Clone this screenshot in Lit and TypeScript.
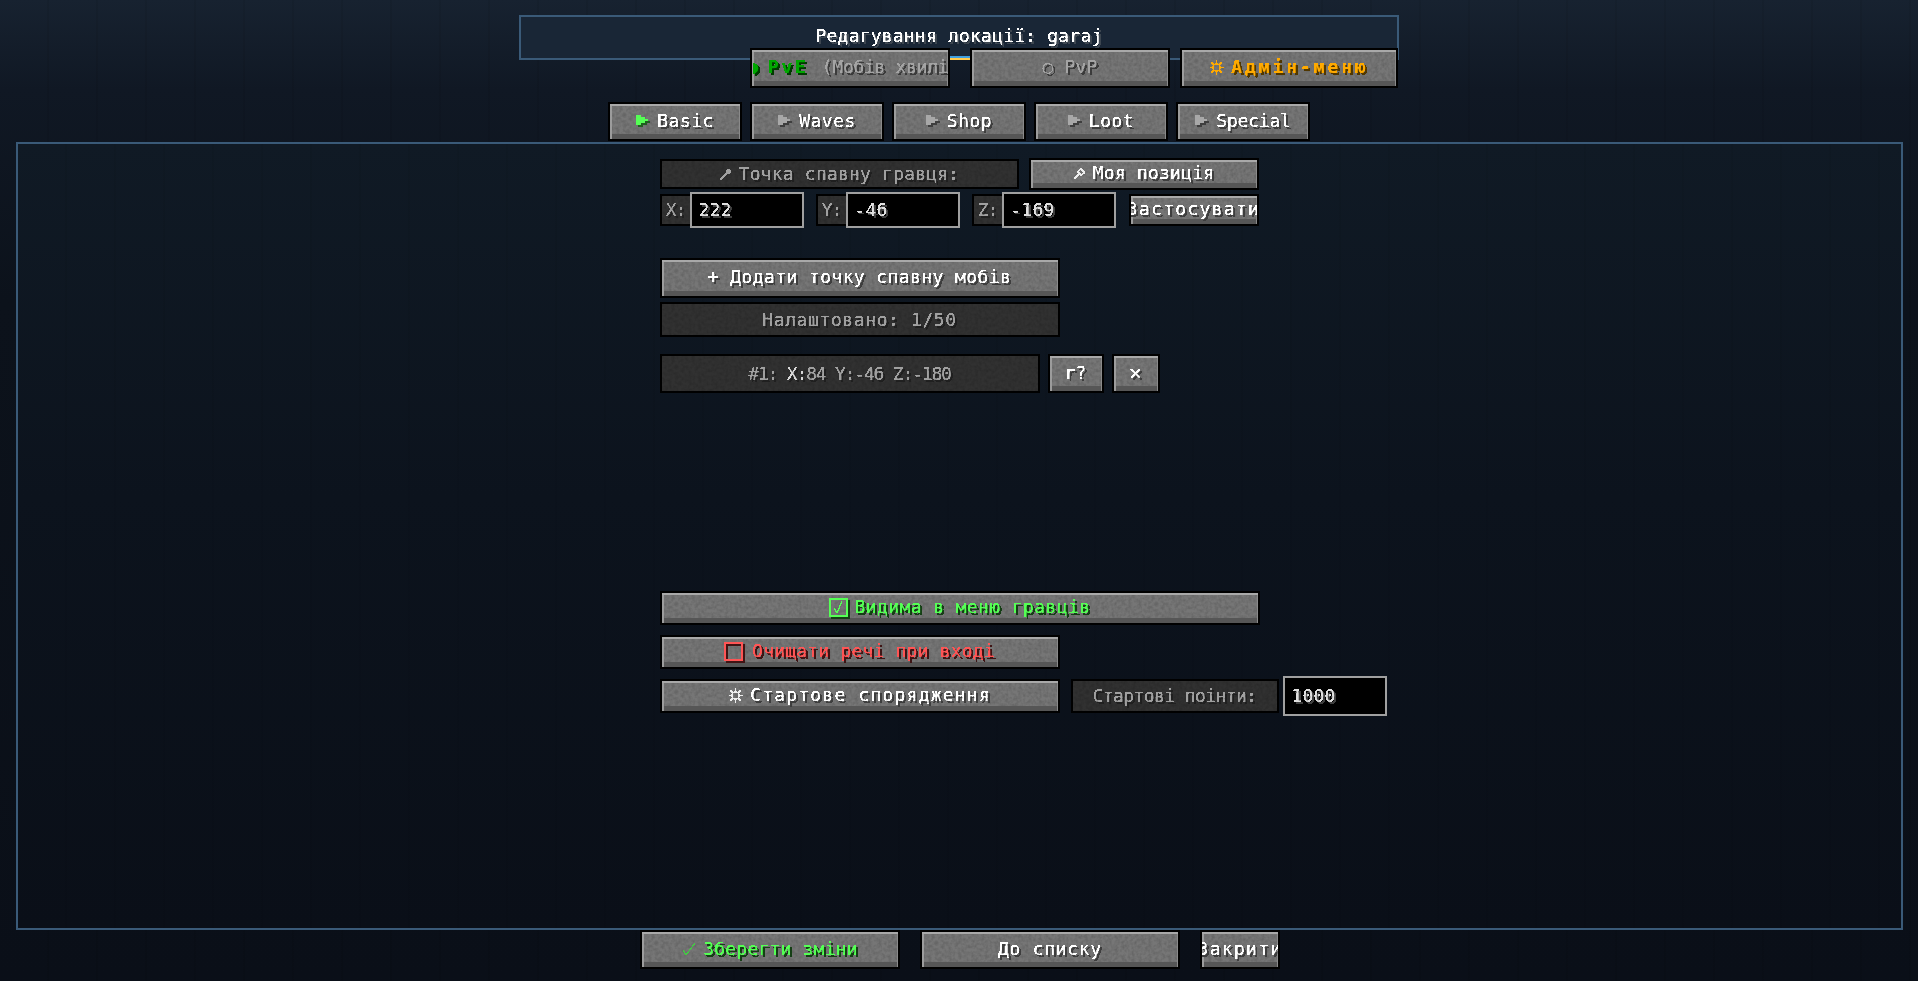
import { LitElement, html, css, svg, unsafeCSS } from "lit";
import { customElement } from "lit/decorators.js";

const noise = (a: number) =>
  unsafeCSS(`url("data:image/svg+xml,%3Csvg xmlns='http://www.w3.org/2000/svg' width='240' height='240'%3E%3Cfilter id='n'%3E%3CfeTurbulence type='fractalNoise' baseFrequency='.3' numOctaves='2' seed='4'/%3E%3CfeColorMatrix values='0 0 0 0 0 0 0 0 0 0 0 0 0 0 0 1.6 0 0 0 -.55'/%3E%3C/filter%3E%3Crect width='240' height='240' filter='url(%23n)' opacity='${a}'/%3E%3C/svg%3E")`);

const tri = (c: string, s: string) => svg`<svg class="ico" width="16" height="16" viewBox="0 0 16 16"><path d="M2 4h5v2h4v2h3v2h-3v2h-4v2h-5z" fill="${s}"/><path d="M0 2h5v2h4v2h3v2h-3v2h-4v2h-5z" fill="${c}"/></svg>`;
const pin = (c: string) => svg`<svg class="ico" width="13" height="13" viewBox="0 0 13 13"><path d="M1 12L8 5" stroke="${c}" stroke-width="1.2" fill="none"/><circle cx="9.5" cy="3.5" r="2.5" fill="${c}"/></svg>`;
const pin2 = svg`<svg class="ico" width="13" height="13" viewBox="0 0 13 13"><path d="M1 12L6 7M4 4l5 5M7 1l5 5M7 2L5 5M11 6L8 8" stroke="#eee" stroke-width="1.3" fill="none"/></svg>`;
const sun = (c: string) => svg`<svg class="ico" width="15" height="17" viewBox="0 0 15 17"><g fill="none" stroke="${c}" stroke-width="1.1"><circle cx="7.5" cy="8.5" r="3.6"/><path d="M7.5 1v2.5M7.5 13.5V16M1 8.5h2.4M12 8.5h2.4M2.5 3.5l2 2M10.5 11.5l2 2M12.5 3.5l-2 2M4.5 11.5l-2 2"/></g></svg>`;

@customElement("app-root")
export class AppRoot extends LitElement {
  static styles = css`
    :host {
      display: block;
      width: 1918px;
      height: 981px;
      overflow: hidden;
      background:
        repeating-linear-gradient(90deg, transparent 0 47px, rgba(0, 0, 0, .07) 47px 49px),
        linear-gradient(180deg, #172230 0, #101824 90px, #0c121b 300px, #0a0f18 100%);
      font-family: "DejaVu Sans Mono", monospace;
      font-size: 18px;
      line-height: 22px;
      color: #fff;
    }
    .page { display: flex; flex-direction: column; align-items: center; padding-top: 15px; width: 1918px; }
    .filterdefs { position: absolute; width: 0; height: 0; }
    .t {
      display: inline-flex; align-items: center; gap: 7px; white-space: nowrap; flex: none;
      letter-spacing: .2px; text-shadow: 2px 2px 0 #3e3e3e; filter: url(#px);
    }
    .title {
      box-sizing: border-box; width: 880px; height: 45px;
      border: 2px solid #3a5a78; background: #192636;
      display: flex; justify-content: center; padding-top: 8px;
    }
    .title .t { height: 22px; text-shadow: 2px 2px 0 #3d4650; }
    .modes {
      width: 880px; height: 40px; margin-top: -12px; display: flex; align-items: stretch;
    }
    .flag { width: 20px; align-self: flex-start; margin-top: 8px; height: 4px; background: linear-gradient(#3f9fe0 50%, #ffc94d 50%); }
    .btn, .lbl {
      box-sizing: border-box; display: flex; align-items: center; justify-content: center; overflow: hidden;
      border: 2px solid #000; flex: none;
    }
    .btn {
      background: ${noise(0.18)} #767676;
      box-shadow: inset 0 2px #a9a9a9, inset 2px 0 #9c9c9c, inset -1px 0 #8a8a8a, inset 0 -5px #565656;
      padding-bottom: 2px;
    }
    .lbl {
      background: ${noise(0.18)} #313131;
      color: #a0a0a0;
    }
    .lbl .t { text-shadow: 2px 2px 0 #202020; }
    .grey { color: #a4a4a4; }
    .t.grey { text-shadow: 2px 2px 0 #3b3b3b; }
    .pve { width: 200px; margin-left: 231px; }
    .pve .t { letter-spacing: -.3px; padding-left: 9px; }
    .dot { margin-right: -9px; }
    .pvp { width: 200px; }
    .admin { width: 218px; margin-left: 10px; }
    .b { font-weight: bold; letter-spacing: 2.6px; }
    .t.b { letter-spacing: 2.9px; }
    .plain-b { font-weight: bold; }
    .green-d { color: #00a800; text-shadow: 2px 2px 0 #003a00; }
    .orange { color: #ffaa00; text-shadow: 2px 2px 0 #513700; }
    .gap0 { gap: 0; }
    .sp { white-space: pre; }
    .tabs { display: flex; gap: 8px; margin-top: 14px; height: 39px; }
    .tab { width: 134px; }
    .tab .t { letter-spacing: .5px; gap: 5px; }
    .tab.last .t { letter-spacing: -.2px; }
    .main {
      box-sizing: border-box; width: 1887px; height: 788px; margin-top: 1px;
      border: 2px solid #3a5a78;
      background:
        repeating-linear-gradient(90deg, transparent 0 47px, rgba(0, 0, 0, .05) 47px 49px),
        linear-gradient(180deg, #101a25 0, #0c131d 45%, #0a0f18 100%);
      padding: 15px 0 0 642px; display: flex; flex-direction: column;
    }
    .row { display: flex; align-items: center; }
    .r1 { height: 30px; gap: 10px; }
    .spawn { width: 359px; height: 30px; }
    .mypos { width: 230px; height: 32px; }
    .r2 { height: 36px; margin-top: 3px; }
    .axis { width: 30px; height: 32px; border-right: 0; }
    .axis .t { letter-spacing: -1px; }
    .inp {
      box-sizing: border-box; width: 114px; height: 36px; background: #000; border: 2px solid #a0a0a0;
      display: flex; align-items: center; padding: 0 7px;
    }
    .inp .t { text-shadow: 2px 2px 0 #3f3f3f; color: #e0e0e0; }
    .xyz { margin-right: 12px; }
    .apply { width: 130px; height: 32px; margin-left: 1px; }
    .apply .t, .close .t { letter-spacing: 1.3px; }
    .add { width: 400px; height: 40px; margin-top: 30px; }
    .add .t { letter-spacing: .4px; }
    .cfg { width: 400px; height: 35px; margin-top: 4px; }
    .cfg .t { letter-spacing: .6px; }
    .r3 { margin-top: 17px; height: 39px; gap: 8px; }
    .point { width: 380px; height: 39px; }
    .point .t { letter-spacing: -1.2px; }
    .wh { color: #d8d8d8; }
    .rq { width: 56px; height: 39px; }
    .xx { width: 48px; height: 39px; }
    .xx .t { font-size: 22px; }
    .vis { width: 600px; height: 34px; margin-top: 198px; }
    .vis .t { letter-spacing: .4px; }
    .clear { width: 400px; height: 34px; margin-top: 10px; }
    .clear .t { gap: 9px; }
    .box {
      box-sizing: border-box; width: 19px; height: 19px; border: 2px solid currentColor; flex: none; display: block;
    }
    .g .box { box-shadow: 2px 2px 0 #153f15; }
    .r .box { box-shadow: 2px 2px 0 #3f1515, inset 2px 2px 0 #3f1515; }
    .r4 { margin-top: 7px; height: 40px; }
    .start { width: 400px; height: 34px; }
    .start .t { letter-spacing: 1.2px; }
    .points { width: 208px; height: 34px; margin-left: 11px; }
    .points .t { letter-spacing: -.6px; }
    .pin { width: 104px; height: 40px; margin-left: 4px; }
    .g { color: #55ff55; }
    .g.t { text-shadow: 2px 2px 0 #153f15; }
    .r { color: #ff5555; }
    .r.t { text-shadow: 2px 2px 0 #3f1515; }
    .foot { display: flex; margin-top: 0; height: 39px; width: 1918px; padding-left: 640px; box-sizing: border-box; }
    .save, .back { width: 260px; height: 39px; }
    .back { margin-left: 20px; }
    .back .t { letter-spacing: .7px; }
    .close { width: 80px; height: 39px; margin-left: 20px; }
    .ico { flex: none; display: block; }
  `;

  render() {
    return html`
      <svg class="filterdefs" aria-hidden="true">
        <filter id="px" x="-5%" y="-10%" width="110%" height="130%" color-interpolation-filters="sRGB">
          <feComponentTransfer><feFuncA type="discrete" tableValues="0 1 1"></feFuncA></feComponentTransfer>
        </filter>
      </svg>
      <div class="page">
        <div class="title"><span class="t">Редагування локації: garaj</span></div>
        <div class="modes">
          <div class="btn pve"><span class="t gap0 sp grey"><span class="b green-d"><span class="dot">◗</span> PvE </span>(Мобів хвилі)</span></div>
          <div class="flag"></div>
          <div class="btn pvp"><span class="t grey">○ PvP</span></div>
          <div class="btn admin"><span class="t b orange">${sun("#ffaa00")}Адмін-меню</span></div>
        </div>
        <div class="tabs">
          <div class="btn tab"><span class="t">${tri("#55ff55", "#1f5f1f")}Basic</span></div>
          <div class="btn tab"><span class="t">${tri("#a8a8a8", "#3e3e3e")}Waves</span></div>
          <div class="btn tab"><span class="t">${tri("#a8a8a8", "#3e3e3e")}Shop</span></div>
          <div class="btn tab"><span class="t">${tri("#a8a8a8", "#3e3e3e")}Loot</span></div>
          <div class="btn tab last"><span class="t">${tri("#a8a8a8", "#3e3e3e")}Special</span></div>
        </div>
        <div class="main">
          <div class="row r1">
            <div class="lbl spawn"><span class="t">${pin("#a0a0a0")}Точка спавну гравця:</span></div>
            <div class="btn mypos"><span class="t">${pin2}Моя позиція</span></div>
          </div>
          <div class="row r2">
            <div class="lbl axis"><span class="t">X:</span></div>
            <div class="inp xyz"><span class="t">222</span></div>
            <div class="lbl axis"><span class="t">Y:</span></div>
            <div class="inp xyz"><span class="t">-46</span></div>
            <div class="lbl axis"><span class="t">Z:</span></div>
            <div class="inp xyz"><span class="t">-169</span></div>
            <div class="btn apply"><span class="t">Застосувати</span></div>
          </div>
          <div class="btn add"><span class="t sp gap0"><span class="plain-b">+ </span>Додати точку спавну мобів</span></div>
          <div class="lbl cfg"><span class="t">Налаштовано: 1/50</span></div>
          <div class="row r3">
            <div class="lbl point"><span class="t sp gap0">#1: <span class="wh">X:</span>84 Y:-46 Z:-180</span></div>
            <div class="btn rq"><span class="t">r?</span></div>
            <div class="btn xx"><span class="t">×</span></div>
          </div>
          <div class="btn vis"><span class="t g">
            <span class="box"><svg class="ico" width="15" height="15" viewBox="0 0 15 15"><path d="M3 8l3 5 5-12" fill="none" stroke="#55ff55"/></svg></span>Видима в меню гравців</span></div>
          <div class="btn clear"><span class="t r"><span class="box"></span>Очищати речі при вході</span></div>
          <div class="row r4">
            <div class="btn start"><span class="t">${sun("#eeeeee")}Стартове спорядження</span></div>
            <div class="lbl points"><span class="t">Стартові поінти:</span></div>
            <div class="inp pin"><span class="t">1000</span></div>
          </div>
        </div>
        <div class="foot">
          <div class="btn save"><span class="t g">
            <svg class="ico" width="14" height="14" viewBox="0 0 14 14"><path d="M1 8l3 5L13 1" fill="none" stroke="#45c845" stroke-width="1"/></svg>Зберегти зміни</span></div>
          <div class="btn back"><span class="t">До списку</span></div>
          <div class="btn close"><span class="t">Закрити</span></div>
        </div>
      </div>
    `;
  }
}
